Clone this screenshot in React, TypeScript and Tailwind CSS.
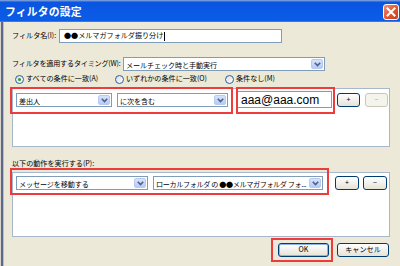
import type { ReactNode } from 'react';

const jp = { fontFamily: '"Noto Sans CJK JP", "Noto Sans", sans-serif' };

function Chevron() {
  return (
    <svg width="7" height="5" viewBox="0 0 7 5">
      <path d="M0.8 0.8 L3.5 3.6 L6.2 0.8" fill="none" stroke="#4d6185" strokeWidth="1.6" />
    </svg>
  );
}

function Select({ width, children, tight }: { width: string; children: ReactNode; tight?: boolean }) {
  return (
    <div className={`${width} h-[14px] flex items-stretch bg-white border border-[#7f9db9] pl-[2px] p-[1px]`}>
      <span
        className={`flex-1 text-[7.1px] leading-[12px] whitespace-nowrap overflow-hidden text-black ${
          tight ? 'tracking-[-0.35px]' : 'tracking-[-0.1px]'
        }`}
      >
        {children}
      </span>
      <span className="w-[12px] shrink-0 flex items-center justify-center rounded-[2px] bg-gradient-to-b from-[#d6e3fd] to-[#b6cbf6] border border-[#b9c9ef]">
        <Chevron />
      </span>
    </div>
  );
}

function XpButton({ width, children, disabled, focused }: { width: string; children: ReactNode; disabled?: boolean; focused?: boolean }) {
  return (
    <div
      className={`${width} h-[14px] flex items-center justify-center rounded-[3px] text-[7.1px] leading-none whitespace-nowrap ${
        disabled
          ? 'border border-[#c9c7ba] bg-[#f5f4ea] text-[#aca899]'
          : 'border border-[#003c74] bg-gradient-to-b from-white to-[#e6e3d6] text-black'
      } ${focused ? 'shadow-[inset_0_0_0_1px_#8eb4f0]' : ''}`}
    >
      {children}
    </div>
  );
}

function Radio({ checked, label }: { checked?: boolean; label: string }) {
  return (
    <div className="flex items-center gap-[2px]">
      <span className="w-[9px] h-[9px] rounded-full border border-[#2f5ea5] bg-gradient-to-br from-[#dcdcd6] to-white flex items-center justify-center">
        {checked && <span className="w-[3px] h-[3px] rounded-full bg-[#21a121]" />}
      </span>
      <span className="text-[7.1px] leading-none whitespace-nowrap">{label}</span>
    </div>
  );
}

export default function App() {
  return (
    <div className="relative w-[400px] h-[266px] overflow-hidden bg-[#ece9d8] flex flex-col text-black" style={jp}>
      {/* Title bar */}
      <div className="h-[22px] flex items-stretch bg-gradient-to-b from-[#8fa8d8] via-[#0a55e0] via-[10%] to-[#0b5ce8] border-b border-[#3d78ea]">
        <div className="flex-1 pl-[5px] pt-[4px] text-white font-bold text-[10.8px] leading-[14px] tracking-[0.2px]">
          フィルタの設定
        </div>
        <div className="pr-[1px] pt-[4px]">
          <div className="w-[16px] h-[16px] rounded-[3px] border border-white bg-gradient-to-br from-[#f09078] via-[#e2572e] to-[#c5401c] flex items-center justify-center">
            <svg width="10" height="10" viewBox="0 0 10 10">
              <path d="M1.5 1.5 L8.5 8.5 M8.5 1.5 L1.5 8.5" stroke="white" strokeWidth="2" strokeLinecap="square" />
            </svg>
          </div>
        </div>
      </div>

      <div className="flex flex-1">
        {/* left window frame */}
        <div className="w-[4px] flex">
          <span className="w-[1px] bg-[#d8d6cc]" />
          <span className="w-[2px] bg-[#5b6a8c]" />
          <span className="w-[1px] bg-[#b8bfcc]" />
        </div>

        <div className="flex-1 pl-[8px] pr-[10px] flex flex-col">
          {/* filter name */}
          <div className="mt-[7px] h-[14px] flex items-center">
            <span className="w-[47px] text-[7.1px] leading-none whitespace-nowrap">フィルタ名(I):</span>
            <div className="w-[223px] h-[14px] bg-white border border-[#7f9db9] flex items-center pl-[4px] text-[7.1px] leading-none whitespace-nowrap">
              ●●メルマガフォルダ振り分け<span className="ml-[1px] w-[1px] h-[9px] bg-black" />
            </div>
          </div>

          {/* timing */}
          <div className="mt-[14px] h-[14px] flex items-center">
            <span className="w-[111px] text-[7.1px] leading-none whitespace-nowrap tracking-[-0.2px]">フィルタを適用するタイミング(W):</span>
            <Select width="w-[202px]">メールチェック時と手動実行</Select>
          </div>

          {/* radios */}
          <div className="mt-[2px] h-[12px] flex items-center pl-[3px]">
            <div className="w-[100px]"><Radio checked label="すべての条件に一致(A)" /></div>
            <div className="w-[110px]"><Radio label="いずれかの条件に一致(O)" /></div>
            <Radio label="条件なし(M)" />
          </div>

          {/* conditions list */}
          <div className="mt-[3px] h-[59px] bg-white border border-[#a7b7cc] pt-[4px] pl-[3px] flex items-start">
            <div className="flex items-center gap-[5px] h-[14px]">
              <Select width="w-[96px]">差出人</Select>
              <Select width="w-[111px]">に次を含む</Select>
            </div>
            <div
              className="ml-[9px] -mt-[2px] w-[95px] h-[17px] border border-[#7f9db9] bg-white flex items-center pl-[3px] text-[12px] leading-none whitespace-nowrap overflow-hidden"
              style={{ fontFamily: '"Liberation Sans", Arial, sans-serif' }}
            >
              aaa@aaa.com
            </div>
            <div className="ml-[5px] flex gap-[5px]">
              <XpButton width="w-[23px]">+</XpButton>
              <XpButton width="w-[23px]" disabled>−</XpButton>
            </div>
          </div>

          {/* actions label */}
          <div className="mt-[12px] h-[10px] flex items-center text-[7.1px] leading-none whitespace-nowrap">以下の動作を実行する(P):</div>

          {/* actions list */}
          <div className="mt-[3px] h-[65px] bg-white border border-[#a7b7cc] pt-[3px] pl-[3px] flex items-start">
            <div className="flex gap-[5px]">
              <Select width="w-[132px]">メッセージを移動する</Select>
              <Select width="w-[170px]" tight>ローカルフォルダ の ●●メルマガフォルダ フォ...</Select>
            </div>
            <div className="ml-[12px] flex gap-[4px]">
              <XpButton width="w-[24px]">+</XpButton>
              <XpButton width="w-[24px]">−</XpButton>
            </div>
          </div>

          {/* dialog buttons */}
          <div className="mt-[6px] flex justify-end gap-[8px] pr-[1px]">
            <XpButton width="w-[51px]" focused>OK</XpButton>
            <XpButton width="w-[52px]">キャンセル</XpButton>
          </div>
        </div>
      </div>

      {/* red annotation frames */}
      <div className="absolute left-[10px] top-[87px] w-[223px] h-[27px] border-2 border-[#ee3b3b] pointer-events-none" />
      <div className="absolute left-[236px] top-[87px] w-[99px] h-[27px] border-2 border-[#ee3b3b] pointer-events-none" />
      <div className="absolute left-[10px] top-[168px] w-[319px] h-[27px] border-2 border-[#ee3b3b] pointer-events-none" />
      <div className="absolute left-[271px] top-[238px] w-[62px] h-[24px] border-2 border-[#ee3b3b] pointer-events-none" />
    </div>
  );
}
